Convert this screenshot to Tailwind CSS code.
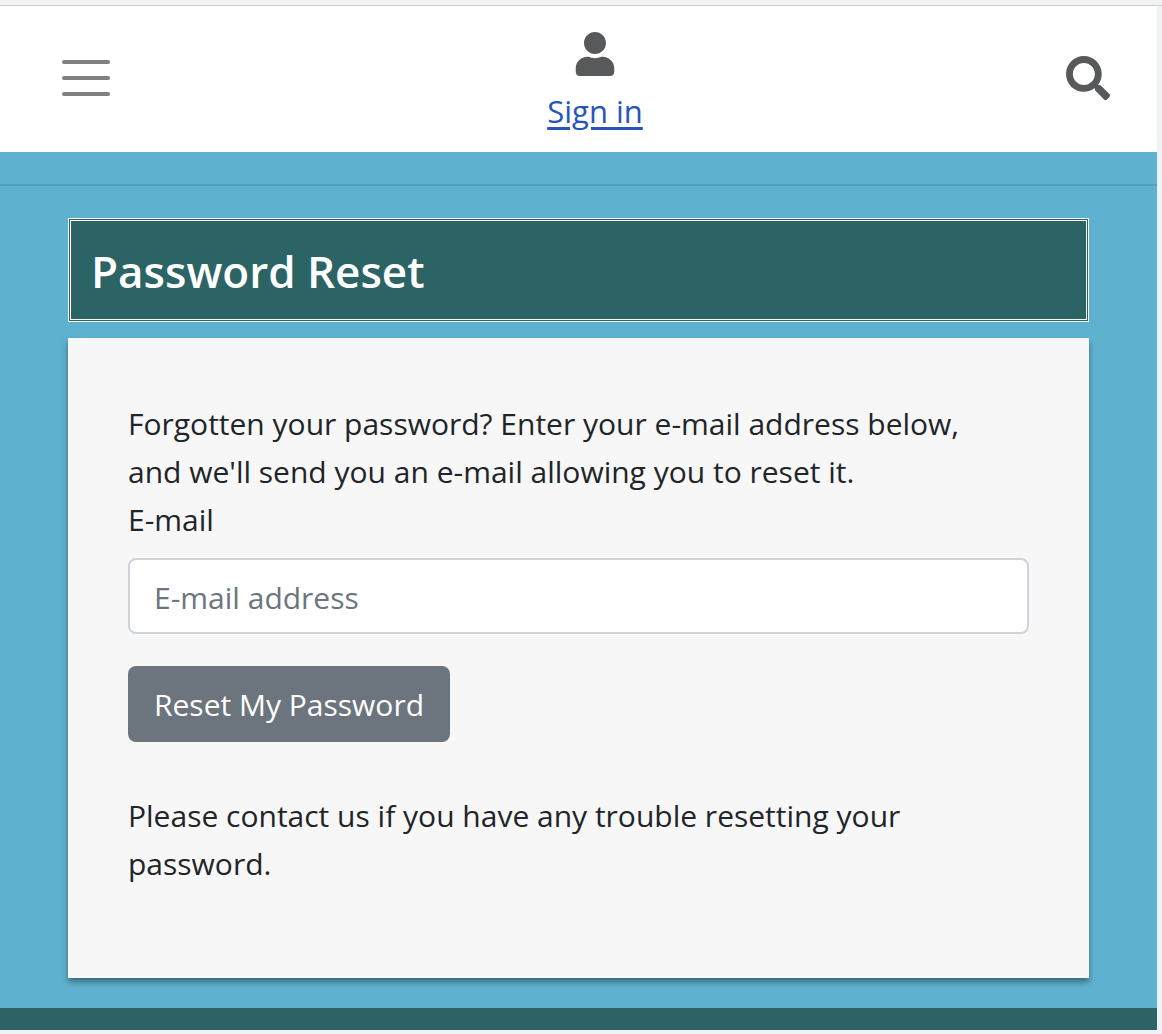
<!DOCTYPE html>
<html lang="en">
<head>
<meta charset="utf-8">
<meta name="viewport" content="width=device-width, initial-scale=1">
<title>Password Reset</title>
<script src="https://cdn.jsdelivr.net/npm/@tailwindcss/browser@4"></script>
</head>
<body class="flex min-h-screen flex-col bg-[#f1f2f5] pb-1 font-['Open_Sans',sans-serif] text-[30px] leading-[48px] text-[#212529]">
  <div class="h-[6px] border-b border-[#cfcfcf] bg-[#f1f3f2]"></div>
  <div class="mr-[5px] flex grow flex-col bg-[#5fb2cf]">
    <header class="flex items-center justify-between bg-white pt-[26px] pr-[47px] pb-4 pl-14">
      <button type="button" aria-label="Toggle navigation" class="pr-2 pb-3">
        <svg class="size-[60px]" viewBox="0 0 30 30" fill="none" stroke="#808080" stroke-width="2" stroke-linecap="round"><path d="M4 7h22M4 15h22M4 23h22"/></svg>
      </button>
      <a href="#" class="flex flex-col items-center text-[31px] text-[#2855b8]">
        <svg class="h-11 w-10" viewBox="0 0 448 512" fill="#57595b" aria-hidden="true"><path d="M224 256c70.7 0 128-57.3 128-128S294.7 0 224 0 96 57.3 96 128s57.3 128 128 128zm89.6 32h-16.7c-22.2 10.2-46.9 16-72.9 16s-50.6-5.8-72.9-16h-16.7C60.2 288 0 348.2 0 422.4V464c0 26.5 21.5 48 48 48h352c26.5 0 48-21.5 48-48v-41.6c0-74.2-60.2-134.4-134.4-134.4z"/></svg>
        <span class="mt-[11px] mb-px underline decoration-[3px] underline-offset-4">Sign in</span>
      </a>
      <button type="button" aria-label="Search" class="pb-3">
        <svg class="size-11" viewBox="0 0 512 512" fill="#57595b"><path d="M505 442.7L405.3 343c-4.500-4.500-10.600-7-17-7H372c27.600-35.300 44-79.700 44-128C416 93.100 322.900 0 208 0S0 93.100 0 208s93.100 208 208 208c48.300 0 92.700-16.400 128-44v16.300c0 6.400 2.500 12.500 7 17l99.700 99.700c9.400 9.400 24.600 9.400 33.900 0l28.300-28.300c9.400-9.400 9.400-24.600.100-34zM208 336c-70.700 0-128-57.200-128-128 0-70.700 57.200-128 128-128 70.700 0 128 57.200 128 128 0 70.700-57.200 128-128 128z"/></svg>
      </button>
    </header>
    <hr class="my-8 border-t-2 border-[#559fba]">
    <main class="mx-[68px] mb-[30px] flex grow flex-col gap-4">
      <h1 class="border-3 border-double border-white bg-[#2c6465] px-5 pt-[22px] pb-5 text-[44px] leading-14 font-semibold text-white">Password Reset</h1>
      <section class="grow bg-[#f7f7f7] px-[60px] pt-[62px] pb-[60px] shadow-[0_4px_6px_rgba(0,0,0,0.4)]">
        <p class="pr-6">Forgotten your password? Enter your e-mail address below, and we'll send you an e-mail allowing you to reset it.</p>
        <form>
          <label for="email" class="block">E-mail</label>
          <input id="email" type="email" placeholder="E-mail address" class="mt-[14px] block h-[76px] w-full rounded-lg border-2 border-[#ced4da] bg-white px-6 pt-[2px] placeholder:text-[#6c757d]">
          <button type="submit" class="mt-8 block h-[76px] rounded-lg bg-[#6c757d] px-[26px] pt-[2px] text-white">Reset My Password</button>
        </form>
        <p class="mt-[50px] pr-6">Please contact us if you have any trouble resetting your password.</p>
      </section>
    </main>
    <footer class="h-[22px] bg-[#2c6465]"></footer>
  </div>
</body>
</html>
